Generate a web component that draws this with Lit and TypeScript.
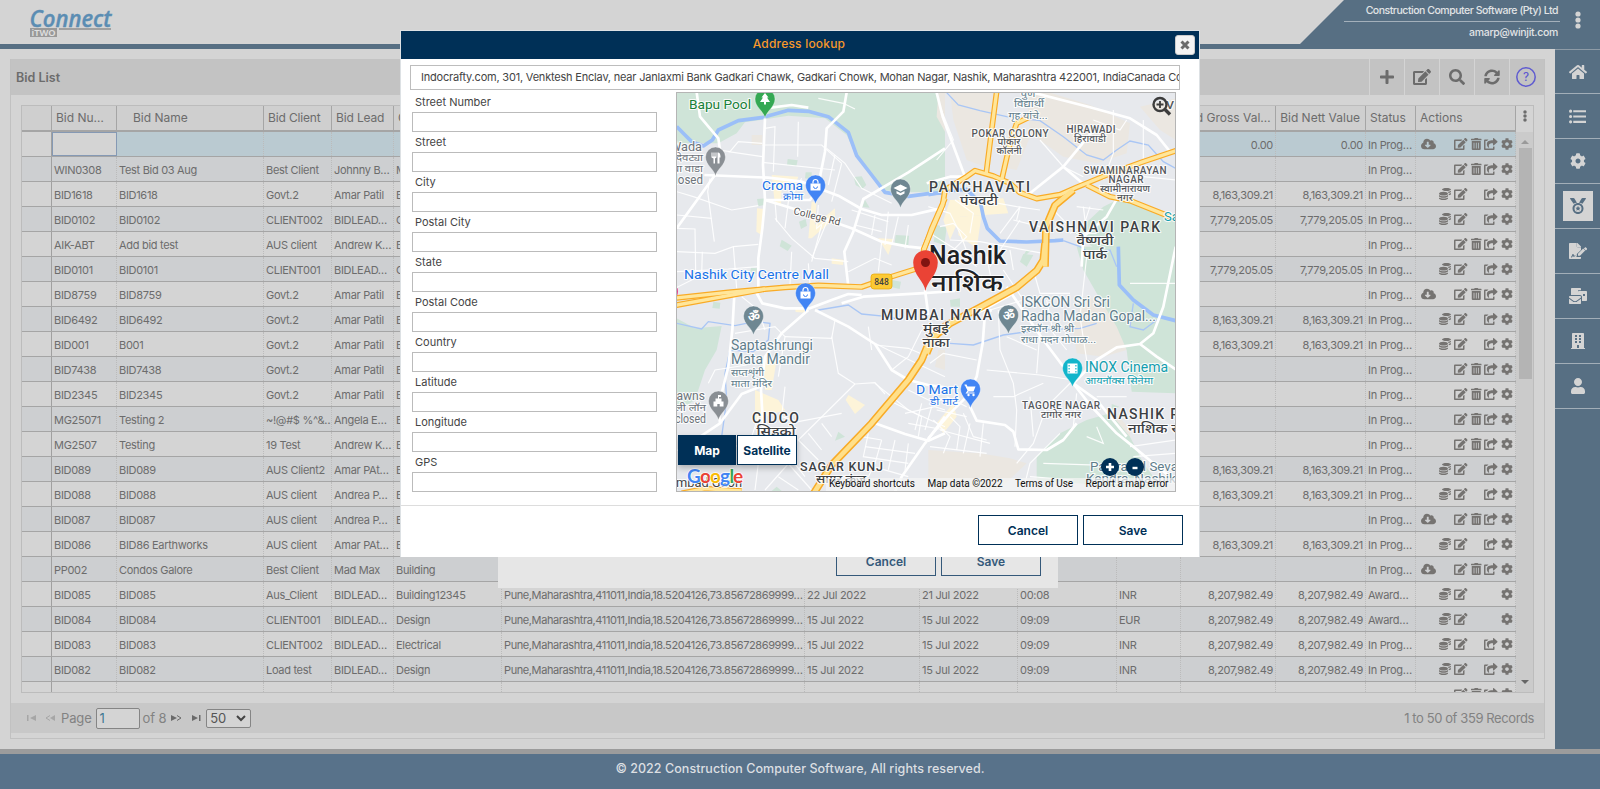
import { LitElement, html, css, svg } from "lit";
import { customElement } from "lit/decorators.js";

const ICON: Record<string, [number, string]> = {
  plus: [448, "M416 208H272V64c0-17.67-14.33-32-32-32h-32c-17.67 0-32 14.33-32 32v144H32c-17.67 0-32 14.33-32 32v32c0 17.67 14.33 32 32 32h144v144c0 17.67 14.33 32 32 32h32c17.67 0 32-14.33 32-32V304h144c17.67 0 32-14.33 32-32v-32c0-17.67-14.33-32-32-32z"],
  search: [512, "M505 442.7L405.3 343c-4.5-4.5-10.6-7-17-7H372c27.6-35.3 44-79.7 44-128C416 93.1 322.9 0 208 0S0 93.1 0 208s93.1 208 208 208c48.3 0 92.7-16.4 128-44v16.3c0 6.4 2.5 12.5 7 17l99.7 99.7c9.4 9.4 24.6 9.4 33.9 0l28.3-28.3c9.4-9.4 9.4-24.6.1-34zM208 336c-70.7 0-128-57.2-128-128 0-70.7 57.2-128 128-128 70.7 0 128 57.2 128 128 0 70.7-57.2 128-128 128z"],
  edit: [576, "M402.6 83.2l90.2 90.2c3.8 3.8 3.8 10 0 13.8L274.4 405.6l-92.8 10.3c-12.4 1.4-22.9-9.1-21.5-21.5l10.3-92.8L388.8 83.2c3.8-3.8 10-3.8 13.8 0zm162-22.9l-48.8-48.8c-15.2-15.2-39.9-15.2-55.2 0l-35.4 35.4c-3.8 3.8-3.8 10 0 13.8l90.2 90.2c3.8 3.8 10 3.8 13.8 0l35.4-35.4c15.2-15.3 15.2-40 0-55.2zM384 346.2V448H64V128h229.8c3.2 0 6.2-1.3 8.5-3.5l40-40c7.6-7.6 2.2-20.5-8.5-20.5H48C21.5 64 0 85.5 0 112v352c0 26.5 21.5 48 48 48h352c26.5 0 48-21.5 48-48V306.2c0-10.7-12.9-16-20.5-8.5l-40 40c-2.2 2.3-3.5 5.3-3.5 8.5z"],
  cog: [512, "M487.4 315.7l-42.6-24.6c4.3-23.2 4.3-47 0-70.2l42.6-24.6c4.9-2.8 7.1-8.6 5.5-14-11.1-35.6-30-67.8-54.7-94.6-3.8-4.1-10-5.1-14.8-2.3L380.8 110c-17.9-15.4-38.5-27.3-60.8-35.1V25.8c0-5.6-3.9-10.5-9.4-11.7-36.7-8.2-74.3-7.8-109.2 0-5.5 1.2-9.4 6.1-9.4 11.7V75c-22.2 7.9-42.8 19.8-60.8 35.1L88.7 85.5c-4.9-2.8-11-1.9-14.8 2.3-24.7 26.7-43.6 58.9-54.7 94.6-1.7 5.4.6 11.2 5.5 14L67.3 221c-4.3 23.2-4.3 47 0 70.2l-42.6 24.6c-4.9 2.8-7.1 8.6-5.5 14 11.1 35.6 30 67.8 54.7 94.6 3.8 4.1 10 5.1 14.8 2.3l42.6-24.6c17.9 15.4 38.5 27.3 60.8 35.1v49.2c0 5.6 3.9 10.5 9.4 11.7 36.7 8.2 74.3 7.8 109.2 0 5.5-1.2 9.4-6.1 9.4-11.7v-49.2c22.2-7.9 42.8-19.8 60.8-35.1l42.6 24.6c4.9 2.8 11 1.9 14.8-2.3 24.7-26.7 43.6-58.9 54.7-94.6 1.5-5.5-.7-11.3-5.6-14.1zM256 336c-44.1 0-80-35.9-80-80s35.9-80 80-80 80 35.9 80 80-35.9 80-80 80z"],
  user: [448, "M224 256c70.7 0 128-57.3 128-128S294.7 0 224 0 96 57.3 96 128s57.3 128 128 128zm89.6 32h-16.7c-22.2 10.2-46.9 16-72.9 16s-50.6-5.8-72.9-16h-16.7C60.2 288 0 348.2 0 422.4V464c0 26.5 21.5 48 48 48h352c26.5 0 48-21.5 48-48v-41.6c0-74.2-60.2-134.4-134.4-134.4z"],
  trash: [448, "M32 464a48 48 0 0 0 48 48h288a48 48 0 0 0 48-48V128H32zm272-256a16 16 0 0 1 32 0v224a16 16 0 0 1-32 0zm-96 0a16 16 0 0 1 32 0v224a16 16 0 0 1-32 0zm-96 0a16 16 0 0 1 32 0v224a16 16 0 0 1-32 0zM432 32H312l-9.4-18.7A24 24 0 0 0 281.1 0H166.8a23.72 23.72 0 0 0-21.4 13.3L136 32H16A16 16 0 0 0 0 48v32a16 16 0 0 0 16 16h416a16 16 0 0 0 16-16V48a16 16 0 0 0-16-16z"],
  home: [576, "M280.37 148.26L96 300.11V464a16 16 0 0 0 16 16l112.06-.29a16 16 0 0 0 15.92-16V368a16 16 0 0 1 16-16h64a16 16 0 0 1 16 16v95.64a16 16 0 0 0 16 16.05L464 480a16 16 0 0 0 16-16V300L295.67 148.26a12.19 12.19 0 0 0-15.3 0zM571.6 251.47L488 182.56V44.05a12 12 0 0 0-12-12h-56a12 12 0 0 0-12 12v72.61L318.47 43a48 48 0 0 0-61 0L4.34 251.47a12 12 0 0 0-1.6 16.9l25.5 31A12 12 0 0 0 45.15 301l235.22-193.74a12.19 12.19 0 0 1 15.3 0L530.9 301a12 12 0 0 0 16.9-1.6l25.5-31a12 12 0 0 0-1.7-16.93z"],
  cloud: [640, "M537.6 226.6c4.1-10.7 6.4-22.4 6.4-34.6 0-53-43-96-96-96-19.7 0-38.1 6-53.3 16.2C367 64.2 315.3 32 256 32c-88.4 0-160 71.6-160 160 0 2.7.1 5.4.2 8.1C40.2 219.8 0 273.2 0 336c0 79.5 64.5 144 144 144h368c70.7 0 128-57.3 128-128 0-61.9-44-113.6-102.4-125.4zm-132.9 88.7L299.3 420.7c-6.2 6.2-16.4 6.2-22.6 0L171.3 315.3c-10.1-10.1-2.9-27.3 11.3-27.3H248V176c0-8.8 7.2-16 16-16h48c8.8 0 16 7.2 16 16v112h65.4c14.2 0 21.4 17.2 11.3 27.3z"],
  share: [576, "M568.482 177.448L424.479 313.433C409.3 327.768 384 317.14 384 295.985v-71.963c-144.575.97-205.566 35.113-164.775 171.353 4.483 14.973-12.846 26.567-25.006 17.33C155.252 383.105 120 326.488 120 269.339c0-143.937 117.599-172.5 264-173.312V24.012c0-21.174 25.317-31.768 40.479-17.448l144.003 135.988c10.02 9.463 10.028 25.425 0 34.896zM384 379.128V448H64V128h50.916a11.99 11.99 0 0 0 8.648-3.693c14.953-15.568 32.237-27.89 51.014-37.676C185.708 80.83 181.584 64 169.033 64H48C21.49 64 0 85.49 0 112v352c0 26.51 21.49 48 48 48h352c26.51 0 48-21.49 48-48v-88.806c0-8.288-8.197-14.066-16.011-11.302a71.83 71.83 0 0 1-34.189 3.377c-7.27-1.046-13.8 4.514-13.8 11.859z"],
  coins: [512, "M0 405v43c0 35 86 64 192 64s192-29 192-64v-43c-41 29-117 43-192 43S41 434 0 405zM320 128c106 0 192-29 192-64S426 0 320 0 128 29 128 64s86 64 192 64zM0 300v52c0 35 86 64 192 64s192-29 192-64v-52c-41 34-117 52-192 52S41 334 0 300zm416 11c57-11 96-32 96-55v-43c-23 17-57 28-96 35zM192 160C86 160 0 196 0 240s86 80 192 80 192-36 192-80-86-80-192-80zm219 56c60-11 101-32 101-56v-43c-35 25-96 40-161 42 31 15 53 34 60 57z"],
  building: [448, "M436 480h-20V24c0-13-11-24-24-24H56C43 0 32 11 32 24v456H12c-7 0-12 5-12 12v20h448v-20c0-7-5-12-12-12zM128 76c0-7 5-12 12-12h40c7 0 12 5 12 12v40c0 7-5 12-12 12h-40c-7 0-12-5-12-12zm0 96c0-7 5-12 12-12h40c7 0 12 5 12 12v40c0 7-5 12-12 12h-40c-7 0-12-5-12-12zm52 148h-40c-7 0-12-5-12-12v-40c0-7 5-12 12-12h40c7 0 12 5 12 12v40c0 7-5 12-12 12zm76 160h-64v-84c0-7 5-12 12-12h40c7 0 12 5 12 12zm64-172c0 7-5 12-12 12h-40c-7 0-12-5-12-12v-40c0-7 5-12 12-12h40c7 0 12 5 12 12zm0-96c0 7-5 12-12 12h-40c-7 0-12-5-12-12v-40c0-7 5-12 12-12h40c7 0 12 5 12 12zm0-96c0 7-5 12-12 12h-40c-7 0-12-5-12-12V76c0-7 5-12 12-12h40c7 0 12 5 12 12z"],
  medal: [512, "M223 153L142 17C135 7 125 0 112 0H16C3 0-4 15 3 25l111 159c30-17 68-27 109-31zM496 0h-96c-13 0-23 7-30 17l-81 136c41 4 79 14 109 31L509 25c7-10 0-25-13-25zM256 160c-97 0-176 79-176 176s79 176 176 176 176-79 176-176-79-176-176-176zm0 64a112 112 0 1 1 0 224 112 112 0 0 1 0-224zm0 26l-25 51-57 8 41 40-10 57 51-27 51 27-10-57 41-40-57-8z"],
  list: [512, "M48 48a48 48 0 1 0 0 96 48 48 0 0 0 0-96zm0 160a48 48 0 1 0 0 96 48 48 0 0 0 0-96zm0 160a48 48 0 1 0 0 96 48 48 0 0 0 0-96zM128 64h384v64H128zm0 160h384v64H128zm0 160h384v64H128z"],
  sync: [512, "M371 143c-32-30-73-46-116-46-78 0-145 53-163 127-2 5-6 9-12 9H23c-8 0-14-7-12-14C32 101 134 16 256 16c66 0 127 26 171 69l36-36c15-15 41-4 41 17v134c0 13-11 24-24 24H346c-21 0-32-26-17-41zM32 288h134c21 0 32 26 17 41l-42 42c32 30 73 46 116 46 78 0 145-53 163-127 1-5 6-9 12-9h57c7 0 13 7 12 14-21 112-123 201-245 201-66 0-127-26-171-69l-36 36c-15 15-41 4-41-17V312c0-13 11-24 24-24z"],
  sign: [576, "M218 424c-8-15-30-16-38-1l-8 16c-3 6-9 9-15 9s-12-4-14-10l-15-45-13 39c-6 18-23 30-42 30H64v-32h9c5 0 10-3 12-8l18-55c8-23 41-23 49 0l13 38c18-15 52-10 63 13 5 10 12 13 22 14v-78l134-134V136H272c-13 0-24-11-24-24V0H24C11 0 0 11 0 24v464c0 13 11 24 24 24h336c13 0 24-11 24-24v-40H265c-20 0-37-7-47-24zM384 122c0-6-3-12-7-17L279 7c-5-4-11-7-17-7h-6v128h128zM288 344v64h64l166-165-65-65zm281-176l-25-25c-10-9-25-9-34 0l-34 34 64 64 34-34c5-10 5-29-5-39z"],
  mail: [576, "M160 448c-26 0-38-16-59-31L0 343v137c0 18 14 32 32 32h320c18 0 32-14 32-32V343l-101 74c-21 15-34 31-59 31zm128-192H32c-18 0-32 14-32 32v16l119 87c22 16 46 32 73 32s51-16 73-32l119-87v-16c0-18-14-32-32-32zM320 0H96C78 0 64 14 64 32v192h224V96c0-9 2-16 6-24h90V32c0-18-14-32-32-32zm224 96H320c-18 0-32 14-32 32v96h64c35 0 64 29 64 64v128h128c18 0 32-14 32-32V128c0-18-14-32-32-32zm-32 160h-64v-64h64z"],
};

const icon = (name: string, size: number) =>
  html`<svg class="ic" height=${size} width=${(size * ICON[name][0]) / 512} viewBox="0 0 ${ICON[name][0]} 512"><path fill="currentColor" fill-rule="evenodd" d=${ICON[name][1]} /></svg>`;

const dots = (h: number) =>
  html`<svg class="ic" width="6" height=${h} viewBox="0 0 6 18"><g fill="currentColor"><circle cx="3" cy="3" r="2.6"/><circle cx="3" cy="9" r="2.6"/><circle cx="3" cy="15" r="2.6"/></g></svg>`;

const PUNE = "Pune,Maharashtra,411011,India,18.5204126,73.85672869999…";
const A = "8,163,309.21", B = "7,779,205.05", C = "8,207,982.49";
/* number, name, client, lead, category, address, due, closing, time, currency, value, status,
   actions (c = download, $ = costs, t = delete, s = share) */
const ROWS: string[][] = [
  ["", "", "", "", "", "", "", "", "", "", "0.00", "In Prog…", "cts"],
  ["WIN0308", "Test Bid 03 Aug", "Best Client", "Johnny B…", "Mining", "", "", "", "", "", "", "In Prog…", "ts"],
  ["BID1618", "BID1618", "Govt.2", "Amar Patil", "Building", "", "", "", "", "", A, "In Prog…", "$s"],
  ["BID0102", "BID0102", "CLIENT002", "BIDLEAD…", "Civil", "", "", "", "", "", B, "In Prog…", "$s"],
  ["AIK-ABT", "Add bid test", "AUS client", "Andrew K…", "Building", "", "", "", "", "", "", "In Prog…", "ts"],
  ["BID0101", "BID0101", "CLIENT001", "BIDLEAD…", "Civil", "", "", "", "", "", B, "In Prog…", "$s"],
  ["BID8759", "BID8759", "Govt.2", "Amar Patil", "Building", "", "", "", "", "", "", "In Prog…", "cts"],
  ["BID6492", "BID6492", "Govt.2", "Amar Patil", "Building", "", "", "", "", "", A, "In Prog…", "$s"],
  ["BID001", "B001", "Govt.2", "Amar Patil", "Building", "", "", "", "", "", A, "In Prog…", "$s"],
  ["BID7438", "BID7438", "Govt.2", "Amar Patil", "Building", "", "", "", "", "", "", "In Prog…", "ts"],
  ["BID2345", "BID2345", "Govt.2", "Amar Patil", "Building", "", "", "", "", "", "", "In Prog…", "ts"],
  ["MG25071", "Testing 2", "~!@#$ %^&…", "Angela E…", "Building", "", "", "", "", "", "", "In Prog…", "ts"],
  ["MG2507", "Testing", "19 Test", "Andrew K…", "Building", "", "", "", "", "", "", "In Prog…", "ts"],
  ["BID089", "BID089", "AUS Client2", "Amar PAt…", "Building", "", "", "", "", "", A, "In Prog…", "$s"],
  ["BID088", "BID088", "AUS client", "Andrea P…", "Building", "", "", "", "", "", A, "In Prog…", "$s"],
  ["BID087", "BID087", "AUS client", "Andrea P…", "Building", "", "", "", "", "", "", "In Prog…", "cts"],
  ["BID086", "BID86 Earthworks", "AUS client", "Amar PAt…", "Building", "", "", "", "", "", A, "In Prog…", "$s"],
  ["PP002", "Condos Galore", "Best Client", "Mad Max", "Building", "", "", "", "", "", "", "In Prog…", "cts"],
  ["BID085", "BID085", "Aus_Client", "BIDLEAD…", "Building12345", PUNE, "22 Jul 2022", "21 Jul 2022", "00:08", "INR", C, "Award…", "$"],
  ["BID084", "BID084", "CLIENT001", "BIDLEAD…", "Design", PUNE, "15 Jul 2022", "15 Jul 2022", "09:09", "EUR", C, "Award…", "$"],
  ["BID083", "BID083", "CLIENT002", "BIDLEAD…", "Electrical", PUNE, "15 Jul 2022", "15 Jul 2022", "09:09", "INR", C, "In Prog…", "$s"],
  ["BID082", "BID082", "Load test", "BIDLEAD…", "Design", PUNE, "15 Jul 2022", "15 Jul 2022", "09:09", "INR", C, "In Prog…", "$s"],
  ["", "", "", "", "", "", "", "", "", "", "", "", "ts"],
];

/* The map is drawn in four tiles, each in its own threefold coordinate space. */
type Tile = { at: [number, number]; green?: string[]; sand?: string[]; glow?: string[]; water?: string[]; stream?: string[]; thin?: string[]; road?: string[]; hwy?: string[]; big?: string[] };
const TILES: Tile[] = [
  {
    at: [675, 85],
    green: ["5,22 790,22 785,95 810,140 810,320 700,322 620,315 545,215 515,150 450,100 340,92 210,112 185,145 130,175 5,175", "338,222 368,226 364,244 336,240", "392,262 410,262 410,284 390,280", "536,276 560,274 574,300 562,312 542,300", "246,342 270,340 268,360 250,364", "372,410 392,402 396,422 378,432", "320,464 350,482 338,498 314,484", "662,450 702,452 700,480 658,480", "784,420 815,428 808,480 776,470", "570,345 584,368 562,366", "228,548 246,550 244,566 226,564", "650,585 678,590 674,612 648,606"],
    sand: ["790,22 810,22 810,140 770,130", "230,150 262,150 262,180 230,180"],
    glow: ["290,270 370,275 360,300 320,300 318,360 300,360", "246,370 268,372 260,450 244,440", "410,350 425,350 420,420 480,370 480,400 410,460 400,460", "470,520 506,525 504,540 470,536", "610,460 656,462 640,510", "850,395 920,390 905,490 850,450"],
    water: ["5,125 30,150 50,170 85,183 112,165 130,135 190,107 265,97 340,76 400,79 460,95 520,142 545,212 590,270 630,322 700,334 760,326 810,324"],
    thin: ["270,130 300,125 295,260", "262,180 440,180 500,235", "130,195 165,200 190,170 262,175", "262,232 480,255", "370,110 368,215", "500,235 470,350", "480,210 460,300", "455,190 510,235 560,310 650,355", "5,320 55,335 170,375 250,362", "5,500 120,505 175,485 250,478", "105,280 98,320 118,470", "175,485 185,610", "300,400 350,460 420,520 520,530", "430,360 425,430 460,400 410,520", "640,380 630,480", "600,390 590,450", "670,395 650,480", "530,375 640,410", "540,420 620,440", "160,200 262,215", "440,420 410,530", "5,430 60,432 62,560", "430,40 505,55 540,72", "300,350 305,410", "380,280 340,350 330,430", "700,420 690,490", "620,470 610,560", "520,560 600,520 650,540", "250,545 160,552 5,560", "350,500 345,600", "5,390 110,400", "0,610 80,570 82,500", "400,535 405,598"],
    road: ["65,22 75,95 130,160 135,195 120,270 70,340 5,430", "88,270 280,278 380,290 430,310 490,332 560,372 620,390 710,390 770,376 810,370", "515,22 505,80 455,130 450,200 420,350", "270,100 264,240 270,345 262,430 250,520 250,612", "270,345 400,385 530,430 620,470 700,485 750,490", "810,190 700,262 565,342 535,440 508,500 520,605", "270,70 350,60 400,68", "430,310 405,345 270,345", "750,615 760,690", "500,655 565,635 735,625 840,618"],
    hwy: ["-5,640 160,622 330,607 430,601 560,606 640,578 690,562 745,545", "745,500 770,430 790,385 810,340"],
  },
  {
    at: [930, 20],
    green: ["-5,215 18,215 0,290", "435,640 520,560 580,530 620,550 737,585 737,740 470,740 500,690", "18,615 48,622 42,655 10,650", "280,702 310,705 290,740 270,725"],
    sand: ["60,215 190,215 165,440 110,420 70,300", "290,215 350,215 480,255 600,310 590,400 500,430 400,410 300,340", "630,260 737,235 737,360 690,330", "215,350 300,350 260,450 210,440"],
    glow: ["60,540 220,535 235,580 90,590 60,660 40,600", "70,595 140,590 100,670"],
    water: ["-5,524 60,512 110,508 152,550 160,590 172,625 210,663 290,666 375,662 400,660"],
    stream: ["50,218 85,255 150,272 230,290 330,302 400,350 470,405 520,420 560,390 600,363 655,375 700,425 737,445", "400,662 450,680 480,700 540,690 560,740"],
    thin: ["550,270 550,400 520,480", "590,300 570,330 490,300", "460,470 400,440 330,360", "737,480 640,470", "480,560 460,620 420,640", "440,560 520,570", "210,640 270,560 260,600", "30,620 70,610 110,650 60,700", "0,640 80,690 140,740", "250,600 330,620", "360,560 440,640 500,640", "150,540 260,560 330,570", "270,600 210,690 180,740", "60,660 150,665 340,700", "-5,560 60,580 90,640 120,720", "75,540 130,580 120,640", "30,260 70,360 20,420", "640,300 640,420", "460,560 470,640"],
    road: ["20,218 38,290 75,390 105,470", "310,218 480,262 600,295 680,345 720,395", "495,325 400,440 300,520", "400,440 470,500", "570,520 530,590 460,650 455,740", "-10,490 60,470 110,470"],
    hwy: ["200,215 185,330 168,465", "300,290 260,310 240,370 215,480", "-20,690 10,620 38,555 45,510 110,470 135,452 190,468 240,490 270,518 320,536 390,524 440,502 530,465 640,425 745,390", "470,495 540,530 600,542 745,600"],
    big: ["430,510 375,556 348,620 345,740"],
  },
  {
    at: [675, 290],
    green: ["5,85 60,115 140,108 125,180 90,240 60,330 5,365", "115,35 136,38 134,56 112,54", "490,425 510,440 480,452", "290,603 305,590 320,603"],
    sand: ["790,180 810,180 810,240 780,230"],
    glow: ["265,200 305,210 290,300 270,300", "240,300 310,330 330,360 240,390", "520,315 570,345 540,372 512,330", "360,52 400,52 395,68 362,66"],
    stream: ["5,100 80,117 100,95 180,107 240,95 285,100 280,150 235,185 165,180 150,250 155,330 140,440", "430,60 520,45 560,72 640,80 680,90"],
    thin: ["180,130 300,110 330,140 310,260", "330,140 470,145 480,90", "470,140 490,250 540,282 600,278 630,312", "540,282 370,450 430,510", "330,290 320,380 370,395 500,370", "590,180 580,110", "600,165 700,175 760,200", "650,240 700,200 740,120", "600,280 700,360 810,410", "200,20 250,60 270,120", "215,225 120,240 100,280", "150,440 250,520 330,440", "240,600 250,520 200,470", "270,600 350,510 390,560", "330,510 410,600", "440,400 470,440", "400,430 440,480", "580,430 565,500 700,520", "570,470 720,490", "620,450 600,520 580,560", "660,450 640,540", "700,460 690,540", "640,330 740,380 730,440", "690,370 780,350 810,360", "700,400 810,420", "740,340 720,420", "770,350 750,420", "560,520 700,560", "600,160 640,180 810,260", "700,300 760,330 810,330", "250,380 230,440", "5,480 80,490 130,440", "310,560 370,600", "560,440 620,450"],
    road: ["178,15 172,120 160,230 140,310 130,350 135,400 60,450 20,465", "240,0 262,40 330,55 405,55 470,30 520,12 560,15", "420,60 520,110 600,162 650,240 700,270 760,285 810,292", "400,60 320,130 270,200 258,300 265,420", "135,400 200,312 255,290", "600,400 690,432 760,452 810,430", "810,380 750,460 680,560 660,605"],
    hwy: ["-5,47 160,17 270,-3", "20,610 90,596 200,603"],
    big: ["415,612 470,525 590,400 700,270 740,210 765,150 820,100"],
  },
  {
    at: [930, 250],
    green: ["440,-10 737,-10 737,430 605,425 590,300 560,230 500,130 460,60", "320,620 390,550 470,510 540,490 600,560 640,640 700,720 320,690", "60,150 90,145 90,170 62,170", "290,0 305,0 275,25", "545,462 568,470 545,480"],
    sand: ["455,140 510,150 600,250 590,300 520,320 440,310 430,240", "500,520 560,490 600,540 600,590", "-5,600 150,610 240,625 290,640 200,725 -5,725"],
    glow: ["20,520 70,460 80,500 40,550"],
    water: ["565,-10 568,105 610,150 670,195 737,212"],
    stream: ["60,280 130,285 220,255 330,240 450,235 500,220", "610,160 600,230 640,240 680,210"],
    thin: ["205,180 210,300 250,400 260,480 255,590", "170,360 330,375 430,390", "430,390 350,470 310,580 260,640", "190,440 250,440 340,400", "300,440 310,560", "220,60 280,150 180,180", "310,60 330,130 420,130", "350,150 370,250 410,300", "440,430 430,530", "470,20 450,200 470,330", "600,100 737,100", "500,530 520,580 470,560", "600,590 737,570", "610,620 737,610", "390,550 300,640 280,720", "340,640 640,650", "300,680 430,690", "20,480 110,500", "10,510 60,560 40,610", "60,500 90,530 80,600", "100,490 130,560 170,570", "30,540 180,580", "0,590 170,610", "50,440 110,470", "120,520 100,610", "160,520 150,620", "250,60 240,0", "170,20 190,120", "140,330 40,310 0,340", "500,440 590,440", "330,240 320,370", "230,260 320,300"],
    road: ["737,-10 700,170 670,250 630,282 560,292 500,330 430,400 480,465 560,550 610,590 670,640 720,680", "230,110 340,270 430,390", "185,180 165,190 158,280 140,380 110,440 60,490 -5,565", "120,470 140,512 225,525 250,545 265,598 350,600 400,570 440,520", "630,282 680,320 737,358", "430,400 500,450 590,560", "0,250 60,220 160,180 250,130"],
    big: ["-10,310 10,262 60,220 150,172 260,112 320,62 340,30 345,-20"],
  },
];

const group = (t: Tile, pts: string[] | undefined, c: string, fill: boolean) =>
  svg`<g class=${c} transform="translate(${t.at[0]} ${t.at[1]}) scale(.33333)">${(pts ?? []).map((p) => (fill ? svg`<polygon points=${p} />` : svg`<polyline points=${p} />`))}</g>`;
const areas = (k: keyof Tile) => TILES.map((t) => group(t, t[k] as string[] | undefined, k, true));
const layer = (k: keyof Tile, c: string) => TILES.map((t) => group(t, t[k] as string[] | undefined, c, false));

/* x, baseline, text, font size, class, anchor, fitted width */
type Label = [number, number, string, number, string, string, number];
const LABELS: Label[] = [
  [751, 109, "Bapu Pool", 13.5, "grn", "end", 62], [702, 151, "Wada", 13.5, "gry", "end", 32], [703, 161, "देवट्या", 9.5, "gry", "end", 27], [703, 172, "चा वाडा", 9.5, "gry", "end", 31], [703, 184, "closed", 12, "gry", "end", 34],
  [803, 190, "Croma", 13.5, "blu", "end", 41], [803, 200, "क्रोमा", 10, "blu", "end", 20],
  [684, 279, "Nashik City Centre Mall", 13.5, "blu", "start", 145],
  [929, 192, "PANCHAVATI", 14, "town", "start", 101], [979, 205, "पंचवटी", 13, "town", "middle", 38],
  [1010, 137, "POKAR COLONY", 10, "town s", "middle", 77], [1009, 145, "पोकार", 9, "town s", "middle", 23], [1009, 154, "कॉलनी", 9, "town s", "middle", 25],
  [1091, 133, "HIRAWADI", 10, "town s", "middle", 49], [1090, 142, "हिरावाडी", 9, "town s", "middle", 32],
  [1125, 174, "SWAMINARAYAN", 10, "town s", "middle", 83], [1126, 183, "NAGAR", 10, "town s", "middle", 35], [1125, 192, "स्वामीनारायण", 9, "town s", "middle", 50], [1125, 201, "नगर", 9, "town s", "middle", 16],
  [1029, 232, "VAISHNAVI PARK", 14, "town", "start", 131], [1095, 245, "वैष्णवी", 13, "town", "middle", 37], [1095, 259, "पार्क", 13, "town", "middle", 24],
  [1028, 97, "पुणे", 10, "gryb", "middle", 15], [1029, 107, "विद्यार्थी", 10, "gryb", "middle", 30], [1028, 119, "गृह यांचे...", 10, "gryb", "middle", 39],
  [1164, 221, "Sai", 13, "teal", "start", 18], [1166, 109, "V", 11, "town s", "start", 8],
  [929, 264, "Nashik", 25.5, "city", "start", 77], [931, 290.5, "नाशिक", 24, "city", "start", 72],
  [881, 320, "MUMBAI NAKA", 14, "town", "start", 111], [936, 333, "मुंबई", 13, "town", "middle", 26], [936, 347, "नाका", 13, "town", "middle", 27],
  [731, 350, "Saptashrungi", 14, "gryb", "start", 82], [731, 364, "Mata Mandir", 14, "gryb", "start", 79], [731, 376, "सप्तशृंगी", 10, "gryb", "start", 33], [731, 387, "माता मंदिर", 10, "gryb", "start", 41],
  [1021, 307, "ISKCON Sri Sri", 14, "gryb", "start", 89], [1021, 321, "Radha Madan Gopal...", 14, "gryb", "start", 135], [1021, 332, "इस्कॉन श्री श्री", 10, "gryb", "start", 53], [1021, 343, "राधा मदन गोपाळ...", 10, "gryb", "start", 75],
  [1085, 372, "INOX Cinema", 14, "teal", "start", 83], [1085, 384, "आयनॉक्स सिनेमा", 10, "teal", "start", 68],
  [958, 394, "D Mart", 13.5, "blu", "end", 42], [958, 405, "डी मार्ट", 10, "blu", "end", 28],
  [1061, 409, "TAGORE NAGAR", 10, "town s", "middle", 78], [1061, 418, "टागोर नगर", 9, "town s", "middle", 40],
  [1107, 419, "NASHIK ROAD", 14, "town", "start", 104], [1128, 433, "नाशिक रोड", 13, "town", "start", 62],
  [705, 400, "Lawns", 12.5, "gry", "end", 35], [706, 411, "ली लॉन", 10, "gry", "end", 31], [706, 423, "closed", 12, "gry", "end", 31],
  [752, 423, "CIDCO", 14, "town", "start", 47], [776, 436, "सिडको", 13, "town", "middle", 39],
  [800, 471, "SAGAR KUNJ", 12.5, "town", "start", 83], [841, 483, "सागर कुंज", 11, "town", "middle", 50],
  [676, 487, "mbad Gaon", 12, "town n", "start", 66],
  [1090, 471, "Panjrapol Seva", 12.5, "gryb", "start", 88], [1086, 483, "Kendra, Nashik", 12, "gryb", "start", 90],
];
const label = ([x, y, t, s, c, a, w]: Label) =>
  svg`<text x=${x} y=${y} font-size=${s} class="lb ${c}" text-anchor=${a} textLength=${w} lengthAdjust=${/^town/.test(c) && /[A-Z]{2}/.test(t) ? "spacing" : "spacingAndGlyphs"}>${t}</text>`;
const pin = (x: number, y: number, color: string, glyph: unknown) =>
  svg`<g transform="translate(${x} ${y})"><path d="M0 0C-1.5-7-10-11-10-19a10 10 0 0 1 20 0C10-11 1.500-7 0 0z" fill=${color} stroke="#fff" stroke-opacity=".6" stroke-width=".6"/><g transform="translate(0 -18.500)" fill="#fff">${glyph}</g></g>`;
const bag = svg`<path d="M-5-2H5V5H-5z"/><path d="M-2.500-2v-1.500a2.500 2.500 0 0 1 5 0V-2" fill="none" stroke="#fff" stroke-width="1.200"/><path d="M-2 1a2 2 0 0 0 4 0" fill="none" stroke="#4285f4"/>`;

@customElement("app-root")
export class AppRoot extends LitElement {
  static styles = css`
    :host { display: block; width: 1600px; height: 789px; overflow: hidden; position: relative; background: #d4d4d4; color: #6c6c6c;
      font-family: "Inter", "Open Sans", "Liberation Sans", sans-serif; font-size: 11px; }
    * { box-sizing: border-box; }
    .ic { display: block; }
    .page { display: flex; flex-direction: column; height: 789px; }
    .top { height: 49px; border-bottom: 5px solid #576f83; display: flex; justify-content: space-between; flex: none; }
    .logo { margin: 4px 0 0 28px; }
    .org { width: 300px; height: 49px; background: #576f83; clip-path: polygon(44px 0, 100% 0, 100% 100%, 0 100%, 0 44px); color: #e2e4e6; display: flex; font-size: 10.5px; font-weight: 500; letter-spacing: -0.47px; }
    .who { width: 260px; padding-left: 44px; text-align: right; }
    .who div { height: 22px; line-height: 22px; padding-right: 2px; border-bottom: 1px solid #a4b0bb; }
    .who div + div { border: 0; line-height: 22px; letter-spacing: -.3px; }
    .kebab { padding: 11px 0 0 15px; color: #d4d4d4; }
    .mid { display: flex; flex: 1; min-height: 0; }
    .work { width: 1555px; padding: 10px 10px 10px 10px; }
    .panel { height: 680px; border: 1px solid #c1c1c1; border-top: 0; display: flex; flex-direction: column; }
    .phead { height: 36px; background: #c3c3c3; display: flex; align-items: center; justify-content: space-between; flex: none; }
    .phead h1 { margin: 1px 0 0 5px; font-size: 12.5px; font-weight: 600; letter-spacing: 0; }
    .tools { display: flex; height: 36px; }
    .tools span { width: 35px; border-left: 1px solid #d4d4d4; display: flex; align-items: center; justify-content: center; }
    .tools .help { color: #5f5bd0; padding-right: 2px; }
    .grid { margin: 10px 10px 0; height: 588px; border: 1px solid #bcbcbc; overflow: hidden; display: flex; flex: none; }
    .main { width: 1494px; }
    .row { display: grid; grid-template-columns: 30px 65px 147px 68px 62px 108px 303px 115px 98px 99px 64px 95px 90px 50px 100px; height: 25px; border-bottom: 1px solid #a5a5a5; letter-spacing: -.3px; }
    .row > div { padding: 1px 0 0 2px; line-height: 24px; white-space: nowrap; overflow: hidden; border-right: 1px dotted #bbb; }
    .row > div:first-child { border-right: 1px solid #a0a0a0; }
    .row > div:nth-child(7) { letter-spacing: -.4px; }
    .row.alt { background: #cdcfd1; }
    .row.sel { background: #bacad1; }
    .row.sel > div:first-child { background: #d4d4d4; }
    .row.sel > div:nth-child(2) { background: #d4d4d4; border: 1px solid #8599b4; }
    .row.head { height: 26px; background: #cfcfcf; border-bottom: 2px solid #a5a5a5; font-size: 12px; letter-spacing: 0; }
    .row.head > div { border-right: 1px solid #a5a5a5; padding: 0 0 0 4px; line-height: 24px; letter-spacing: 0; }
    .row.head > div:nth-child(3) { padding-left: 16px; }
    .row.head > div:nth-child(4), .row.head > div:nth-child(5) { letter-spacing: -.15px; }
    .row .num { text-align: right; padding-right: 2px; }
    .row.head > .num { padding-right: 5px; }
    .acts { display: grid; grid-template-columns: 18px 15px 17px 13px 17px 14px; align-items: center; }
    .row > .acts { padding: 0 0 0 5px; color: #757371; }
    .side { width: 18px; display: flex; flex-direction: column; align-items: center; background: #cbcbcb; }
    .cm { height: 26px; width: 18px; background: #d4d4d4; padding: 4px 0 0 6px; flex: none; }
    .up, .dn { width: 0; height: 0; border: 4px solid transparent; flex: none; }
    .up { border-bottom: 4px solid #9a9a9a; margin: 4px 0 4px; }
    .dn { border-top: 4px solid #666; margin-top: auto; margin-bottom: 4px; }
    .thumb { width: 13px; height: 231px; background: #b4b4b4; flex: none; }
    .pager { margin-top: 10px; height: 30px; background: #c8c8c8; display: flex; align-items: center; color: #828282; font-size: 13px; letter-spacing: -.15px; padding-right: 10px; }
    .arr { display: block; }
    .pg { margin-left: 6px; }
    .num1 { margin: 0 3px 0 4px; width: 44px; height: 21px; border: 1px solid #858585; border-radius: 2px; background: #d4d4d4; color: #3f7892; line-height: 19px; padding-left: 3px; }
    .sel1 { margin-left: 5px; width: 45px; height: 19px; border: 1px solid #858585; border-radius: 2px; background: #d4d4d4; color: #555; line-height: 17px; padding: 0 4px 0 3px; display: flex; align-items: center; justify-content: space-between; }
    .tot { margin-left: auto; letter-spacing: -.4px; }
    .nav { width: 45px; background: #576f83; color: #d4d4d4; border-top: 1px solid #8e9ba6; }
    .nav div { height: 45px; border-bottom: 1px solid #a2aeb8; display: flex; align-items: center; justify-content: center; }
    .nav div:first-child { height: 44px; }
    .nav .on { background: #d4d4d4; color: #576f83; width: 30px; height: 30px; display: flex; align-items: center; justify-content: center; }
    .foot { height: 40px; border-top: 5px solid #9c9c9c; background: #58728a; color: #dcdfe2; text-align: center; line-height: 30px; font-size: 12.5px; font-weight: 500; letter-spacing: .05px; }
    .back { position: absolute; left: 498px; top: 500px; width: 560px; height: 88px; background: #e6e6e6; display: flex; justify-content: flex-end; align-items: flex-end; gap: 5px; padding: 0 17px 12px; }
    .btn { width: 100px; height: 30px; border: 1px solid #003057; color: #003057; font-size: 12px; font-weight: 600; line-height: 29px; text-align: center; letter-spacing: 0; }
    .back .btn { border-color: #35597a; color: #35597a; }
    .modal { position: absolute; left: 400px; top: 30px; width: 800px; height: 527px; background: #fff; border: 1px solid #dde1e4; border-bottom: 0; display: flex; flex-direction: column; color: #444; }
    .mh { height: 28px; background: #003057; color: #f7982b; display: flex; align-items: center; justify-content: center; font-size: 12px; font-weight: 500; flex: none; padding-left: 22px; }
    .mh b { flex: 1; text-align: center; font-weight: 500; letter-spacing: .2px; line-height: 26px; height: 28px; }
    .x { width: 20px; height: 20px; background: #f4f4f4; border: 1px solid #ccc; border-radius: 3px; margin-right: 4px; display: flex; align-items: center; justify-content: center; }
    .addr { margin: 6px 19px 2px 9px; height: 25px; border: 1px solid #bdbdbd; padding-left: 10px; line-height: 23px; white-space: nowrap; overflow: hidden; flex: none; letter-spacing: -.2px; }
    .cols { display: flex; height: 400px; flex: none; }
    .form { width: 275px; padding-left: 11px; display: flex; flex-direction: column; }
    .fld { height: 40px; }
    .fld label { display: block; height: 20px; line-height: 21px; padding-left: 3px; letter-spacing: 0; }
    .fld i { display: block; width: 245px; height: 20px; border: 1px solid #bbb; }
    .map { width: 500px; height: 400px; border: 1px solid #b5b5b5; position: relative; overflow: hidden; }
    .map svg { display: block; margin: -1px; }
    .bar { display: flex; gap: 5px; justify-content: flex-end; margin-top: 13px; padding: 9px 16px 0; border-top: 1px solid #ddd; flex: 1; }
    .green { fill: #cfe4d8; } .sand { fill: #ebe7e1; } .glow { fill: #fdf4d9; }
    .water polyline { fill: none; stroke: #9bbff8; stroke-width: 11; stroke-linejoin: round; }
    .stream polyline { fill: none; stroke: #a9c6f5; stroke-width: 4; }
    .thin polyline { fill: none; stroke: #fff; stroke-width: 3.5; stroke-opacity: .9; }
    .road polyline { fill: none; stroke: #fff; stroke-width: 8; stroke-linejoin: round; }
    .hc polyline { fill: none; stroke: #f9ab26; stroke-width: 17; stroke-linejoin: round; }
    .hi polyline { fill: none; stroke: #ffe69b; stroke-width: 10; stroke-linejoin: round; }
    .bc polyline { fill: none; stroke: #f9ab26; stroke-width: 23; stroke-linejoin: round; }
    .bi polyline { fill: none; stroke: #ffe08a; stroke-width: 14; stroke-linejoin: round; }
    .lb { font-family: Roboto, "Noto Sans Devanagari", "Noto Sans", sans-serif; paint-order: stroke; stroke: #fff; stroke-width: 2.2px; stroke-opacity: .85; stroke-linejoin: round; }
    .town { fill: #3c4043; font-weight: 500; } .s { fill: #55585c; } .n { font-weight: 400; }
    .grn { fill: #188038; } .gry { fill: #6c737a; } .gryb { fill: #607d8b; } .blu { fill: #1a73e8; } .teal { fill: #129eaf; } .city { fill: #202124; font-weight: 500; }
    .rd { fill: #555; }
    .tabs { position: absolute; left: 1px; top: 342px; display: flex; }
    .tabs div { width: 60px; height: 30px; border: 1px solid #003057; background: #fff; color: #003057; font-size: 12px; font-weight: 700; line-height: 29px; text-align: center; box-shadow: 0 3px 6px rgba(0,0,0,.25); }
    .tabs .act { background: #003057; color: #fff; width: 58px; margin-right: 1px; }
    .terms { font-family: Roboto, sans-serif; font-size: 10px; fill: #111; }
  `;

  private row(r: string[], i: number) {
    const has = (k: string) => r[12].includes(k);
    return html`<div class="row ${i === 0 ? "sel" : i % 2 ? "alt" : ""}">
      <div></div>${r.slice(0, 10).map((c) => html`<div>${c}</div>`)}
      <div class="num">${r[10]}</div><div class="num">${r[10]}</div><div>${r[11]}</div>
      <div class="acts">
        <span>${has("c") ? icon("cloud", 12) : ""}</span>
        <span>${has("$") ? icon("coins", 12) : ""}</span>
        <span>${icon("edit", 12)}</span>
        <span>${has("t") ? icon("trash", 12) : ""}</span>
        <span>${has("s") ? icon("share", 12) : ""}</span>
        <span>${icon("cog", 12)}</span>
      </div>
    </div>`;
  }

  private map() {
    return html`<div class="map">
      <svg width="500" height="400" viewBox="676 92 500 400">
        <rect x="676" y="92" width="500" height="400" fill="#e7e9ed" />
        ${areas("sand")}${areas("green")}${areas("glow")}
        ${layer("stream", "stream")}${layer("water", "water")}${layer("thin", "thin")}${layer("road", "road")}
        ${layer("hwy", "hc")}${layer("big", "bc")}${layer("hwy", "hi")}${layer("big", "bi")}
        <text class="lb rd" font-size="10" transform="translate(793 214) rotate(14)" textLength="48">College Rd</text>
        <rect x="871" y="274" width="21" height="15" rx="3" fill="#fcc934" stroke="#e8a600" stroke-width=".7" />
        <text x="881.500" y="285" font-size="8.500" font-weight="500" text-anchor="middle" font-family="Roboto" fill="#3c4043">848</text>
        ${LABELS.map(label)}
        ${pin(765, 118, "#34a853", svg`<path d="M0-6.500 3.500-2H2L5 2.500H1V5H-1V2.500H-5L-2-2H-3.500z"/>`)}
        ${pin(715.5, 176, "#8a8f94", svg`<path d="M-4-5h1v4h1v-4h1v4h1v-4h1v5l-1.500 1V6h-1.500V1L-4 0zM2-5c2 0 3 1 3 5H4v6H2z"/>`)}
        ${pin(815.5, 204, "#4285f4", bag)}
        ${pin(805.5, 312, "#4285f4", bag)}
        ${pin(900.5, 208, "#6f8792", svg`<path d="M0-5 7-1.500 0 2-7-1.500zM-4 1.500 0 3.500 4 1.500V4L0 6-4 4z"/>`)}
        ${pin(753.5, 335, "#6f8792", svg`<text y="4" font-size="13" text-anchor="middle" font-weight="700">ॐ</text>`)}
        ${pin(1008.5, 334, "#6f8792", svg`<text y="4" font-size="13" text-anchor="middle" font-weight="700">ॐ</text>`)}
        ${pin(718.5, 420, "#8a8f94", svg`<path d="M-5 5V0h2v-3h2.500v-3.500h3v2H.5V-3H3v3h2v5H1.200V2.500h-2.400V5z"/>`)}
        ${pin(970.5, 408, "#4285f4", svg`<path d="M-6-5h2l1 2h8l-2 5h-5l-1 1h7v1h-9l2-3-2.500-5H-6z"/><circle cx="-2" cy="5.500" r="1.200"/><circle cx="3" cy="5.500" r="1.200"/>`)}
        ${pin(1072.5, 387, "#12b5cb", svg`<path fill-rule="evenodd" d="M-5-5H5V5H-5zM-4-3.500v1.500h1.200v-1.500zm0 3v1.500h1.200V-.5zm0 3V4h1.200V2.500zM2.800-3.500v1.500H4v-1.500zm0 3v1.500H4V-.5zm0 3V4H4V2.500z"/>`)}
        <path d="M925.500 291c-.8-9-12.300-16-12.300-28.500a12.300 12.300 0 0 1 24.600 0C937.800 275 926.300 282 925.500 291z" fill="#ea4335" />
        <circle cx="925.500" cy="262.500" r="4.500" fill="#811411" />
        <path d="M676 286q2 2 2 5.500t-2 5" fill="#e83e8c" />
        <rect x="826" y="478" width="350" height="14" fill="#f5f5f5" fill-opacity=".7" />
        <g class="terms"><text x="829" y="487" textLength="86">Keyboard shortcuts</text><text x="927.500" y="487" textLength="75">Map data ©2022</text><text x="1015" y="487" textLength="58">Terms of Use</text><text x="1085.500" y="487" textLength="83">Report a map error</text></g>
        <g font-family="Lato" font-weight="700" font-size="19" stroke="#fff" stroke-width="1.500" paint-order="stroke">
          <text x="687" y="483" fill="#4285f4">G</text><text x="700" y="483" fill="#ea4335">o</text><text x="710" y="483" fill="#fbbc05">o</text><text x="720" y="483" fill="#4285f4">g</text><text x="729.500" y="483" fill="#34a853">l</text><text x="733" y="483" fill="#ea4335">e</text>
        </g>
        <g fill="none" stroke="#3c3c3c" stroke-width="2.400"><circle cx="1160" cy="104.500" r="6.500"/><path d="M1165 109.500l5 5" stroke-width="3.400"/><path d="M1156.500 104.500h7M1160 101v7" stroke-width="1.800"/></g>
        <g><circle cx="1110" cy="467" r="9" fill="#003057"/><path d="M1106 467h8M1110 463v8" stroke="#fff" stroke-width="2.600"/><circle cx="1135" cy="467" r="9" fill="#003057"/><path d="M1132.500 468h5" stroke="#fff" stroke-width="2.400"/></g>
      </svg>
      <div class="tabs"><div class="act">Map</div><div>Satellite</div></div>
    </div>`;
  }

  render() {
    const heads = ["", "Bid Nu…", "Bid Name", "Bid Client", "Bid Lead", "Category", "", "", "", "", ""];
    return html`
      <div class="page">
        <header class="top">
          <svg class="logo" width="90" height="36" viewBox="28 4 90 36">
            <text x="29.500" y="26.500" font-family="Open Sans" font-style="italic" font-weight="600" font-size="24" fill="#5b8db3" stroke="#5b8db3" stroke-width=".4" textLength="82" lengthAdjust="spacingAndGlyphs">Connect</text>
            <rect x="30" y="28" width="27" height="9" fill="#999" /><rect x="59" y="28" width="52" height="2" fill="#a0a0a0" />
            <text x="31.500" y="35.800" font-family="Noto Sans" font-weight="600" font-size="9.500" fill="#e0e0e0" textLength="24" lengthAdjust="spacingAndGlyphs">iTWO</text>
          </svg>
          <div class="org"><div class="who"><div>Construction Computer Software (Pty) Ltd</div><div>amarp@winjit.com</div></div><div class="kebab">${dots(18)}</div></div>
        </header>
        <div class="mid">
          <div class="work"><section class="panel">
            <div class="phead"><h1>Bid List</h1>
              <div class="tools"><span>${icon("plus", 16)}</span><span>${icon("edit", 16)}</span><span>${icon("search", 16)}</span><span>${icon("sync", 16)}</span>
                <span class="help"><svg width="20" height="20" viewBox="0 0 20 20"><circle cx="10" cy="10" r="9.200" fill="none" stroke="currentColor" stroke-width="1.500"/><text x="10" y="14" text-anchor="middle" font-size="11.500" font-weight="500" fill="currentColor">?</text></svg></span></div>
            </div>
            <div class="grid">
              <div class="main">
                <div class="row head">${heads.map((h) => html`<div>${h}</div>`)}<div class="num">Bid Gross Val…</div><div class="num">Bid Nett Value</div><div>Status</div><div>Actions</div></div>
                ${ROWS.map((r, i) => this.row(r, i))}
              </div>
              <div class="side"><div class="cm">${dots(12)}</div><div class="up"></div><div class="thumb"></div><div class="dn"></div></div>
            </div>
            <div class="pager">
              <svg class="arr" width="44" height="10" viewBox="0 0 44 10"><g transform="translate(0 1)" fill="#a6a6a6"><path d="M16 1h1.500v6H16zM25 1v6l-6-3z"/><path d="M39 1.500 35 4l4 2.500" fill="none" stroke="#a6a6a6"/><path d="M44 1v6l-5-3z"/></g></svg>
              <span class="pg">Page</span><span class="num1">1</span><span>of 8</span>
              <svg class="arr" width="35" height="10" viewBox="0 0 35 10"><g transform="translate(0 1)" fill="#6a6a6a"><path d="M5 1v6l6-3z"/><path d="M11 1.500 15 4l-4 2.500" fill="none" stroke="#6a6a6a"/><path d="M26 1v6l6-3zM33 1h1.500v6H33z"/></g></svg>
              <span class="sel1">50<svg width="10" height="7" viewBox="0 0 10 7"><path d="M1 1l4 4 4-4" fill="none" stroke="#444" stroke-width="2"/></svg></span>
              <span class="tot">1 to 50 of 359 Records</span>
            </div>
          </section></div>
          <nav class="nav"><div>${icon("home", 16)}</div><div>${icon("list", 17)}</div><div>${icon("cog", 16)}</div><div><span class="on">${icon("medal", 16)}</span></div><div>${icon("sign", 16)}</div><div>${icon("mail", 16)}</div><div>${icon("building", 16)}</div><div>${icon("user", 16)}</div></nav>
        </div>
        <footer class="foot">© 2022 Construction Computer Software, All rights reserved.</footer>
      </div>
      <div class="back"><div class="btn">Cancel</div><div class="btn">Save</div></div>
      <section class="modal">
        <div class="mh"><b>Address lookup</b><span class="x"><svg width="10" height="10" viewBox="0 0 10 10"><path d="M1.500 1.500l7 7m0-7l-7 7" stroke="#6b6b6b" stroke-width="3"/></svg></span></div>
        <div class="addr">Indocrafty.com, 301, Venktesh Enclav, near Janlaxmi Bank Gadkari Chawk, Gadkari Chowk, Mohan Nagar, Nashik, Maharashtra 422001, IndiaCanada Corner</div>
        <div class="cols">
          <div class="form">${["Street Number", "Street", "City", "Postal City", "State", "Postal Code", "Country", "Latitude", "Longitude", "GPS"].map((f) => html`<div class="fld"><label>${f}</label><i></i></div>`)}</div>
          ${this.map()}
        </div>
        <div class="bar"><div class="btn">Cancel</div><div class="btn">Save</div></div>
      </section>`;
  }
}
